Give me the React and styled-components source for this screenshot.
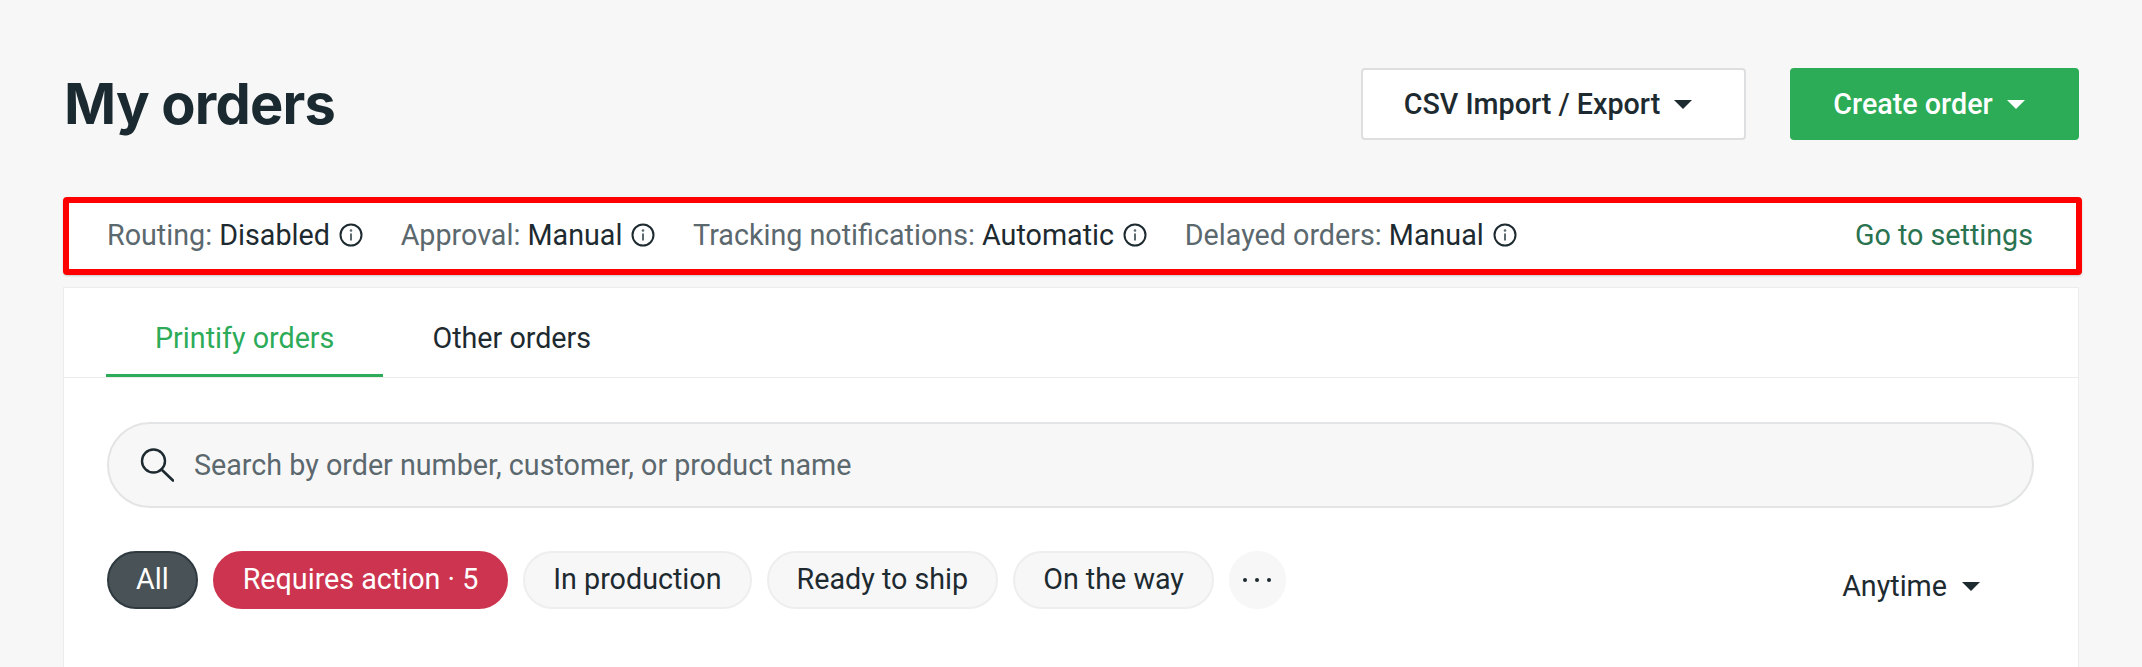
import React from "react";
import styled, { createGlobalStyle } from "styled-components";

const Global = createGlobalStyle`
  html, body { margin: 0; padding: 0; background: #f7f7f7; }
  body { font-family: Roboto, "Liberation Sans", sans-serif; color: #1d2a30; }
`;

const Page = styled.div`
  box-sizing: border-box;
  width: 2142px;
  height: 667px;
  overflow: hidden;
  padding: 68px 63px 0;
  background: #f7f7f7;
`;

const Header = styled.header`
  display: flex;
  align-items: center;
  justify-content: space-between;
  height: 72px;
`;

const Title = styled.h1`
  margin: 0;
  font-family: Inter, sans-serif;
  font-size: 56px;
  font-weight: 700;
  line-height: 72px;
  letter-spacing: -0.8px;
  color: #1a2a30;
  padding-left: 1px;
`;

const Actions = styled.div`
  display: flex;
  gap: 44px;
`;

const Button = styled.button`
  box-sizing: border-box;
  height: 72px;
  width: ${(p) => p.$width}px;
  padding: 0 11px 0 0;
  display: inline-flex;
  align-items: center;
  justify-content: center;
  gap: 14px;
  border-radius: 4px;
  font-family: inherit;
  font-size: 28.7px;
  font-weight: 500;
  border: 2px solid ${(p) => (p.$primary ? "#2cac57" : "#dcdedf")};
  background: ${(p) => (p.$primary ? "#2cac57" : "#fff")};
  color: ${(p) => (p.$primary ? "#fff" : "#1d2a30")};
`;

const Caret = styled.span`
  display: inline-block;
  width: 0;
  height: 0;
  border-left: 9px solid transparent;
  border-right: 9px solid transparent;
  border-top: 9px solid currentColor;
`;

const StatusBar = styled.div`
  box-sizing: border-box;
  height: 78px;
  margin: 57px -3px 12px 0;
  padding: 0 43px 2px 38px;
  display: flex;
  align-items: center;
  justify-content: space-between;
  background: #fff;
  border: 6px solid #ff0000;
  border-radius: 4px;
  box-shadow: 0 1px 2px rgba(0, 0, 0, 0.18);
  font-size: 28.7px;
`;

const StatusList = styled.div`
  display: flex;
  align-items: center;
  gap: 37.7px;
`;

const StatusItem = styled.span`
  display: inline-flex;
  align-items: center;
  gap: 9px;
  color: #5b686e;
  white-space: nowrap;
`;

const StatusValue = styled.b`
  font-weight: 400;
  color: #1d2a30;
`;

const SettingsLink = styled.a`
  color: #2a7350;
  text-decoration: none;
`;

const Card = styled.section`
  box-sizing: border-box;
  height: 400px;
  background: #fff;
  border: 1px solid #ececec;
  border-bottom: none;
`;

const Tabs = styled.div`
  display: flex;
  height: 89px;
  padding-left: 42px;
  border-bottom: 1px solid #ececec;
`;

const Tab = styled.div`
  box-sizing: border-box;
  height: 89px;
  padding: 14px 49px 0;
  display: flex;
  align-items: center;
  font-size: 28.7px;
  color: ${(p) => (p.$active ? "#2dab58" : "#1d2a30")};
  border-bottom: 3px solid ${(p) => (p.$active ? "#2dab58" : "transparent")};
`;

const Search = styled.div`
  box-sizing: border-box;
  height: 86px;
  margin: 44px 44px 0 43px;
  padding: 0 32px 0 31px;
  display: flex;
  align-items: center;
  gap: 20px;
  background: #f7f7f7;
  border: 2px solid #e3e4e5;
  border-radius: 43px;
  font-size: 28.7px;
  color: #5b686e;
`;

const FilterRow = styled.div`
  display: flex;
  align-items: center;
  justify-content: space-between;
  margin: 43px 0 0 43px;
  padding-right: 98px;
`;

const Chips = styled.div`
  display: flex;
  gap: 15px;
`;

const Chip = styled.div`
  box-sizing: border-box;
  height: 58px;
  padding: 0 ${(p) => p.$pad ?? 28}px 2px;
  display: inline-flex;
  align-items: center;
  justify-content: center;
  border-radius: 29px;
  font-size: 28.7px;
  white-space: nowrap;
  color: ${(p) => (p.$tone ? "#fff" : "#1d2a30")};
  background: ${(p) =>
    p.$tone === "danger" ? "#cd344f" : p.$tone === "dark" ? "#495257" : "#f7f7f7"};
  border: 2px solid
    ${(p) =>
      p.$tone === "danger" ? "#cd344f" : p.$tone === "dark" ? "#2f3a40" : "#eeeeee"};
`;

const MoreChip = styled(Chip)`
  width: 57px;
  padding: 0;
  border-color: #f7f7f7;
`;

const Period = styled.div`
  display: inline-flex;
  align-items: center;
  gap: 15px;
  font-size: 28.7px;
  margin-top: 12px;
`;

const Info = () => (
  <svg width="24" height="24" viewBox="0 0 24 24" fill="none" aria-hidden="true">
    <circle cx="12" cy="12" r="10.5" stroke="#1d2a30" strokeWidth="2" />
    <path d="M12 10.5v7" stroke="#5b686e" strokeWidth="2" />
    <circle cx="12" cy="7.5" r="1.3" fill="#5b686e" />
  </svg>
);

const SearchIcon = () => (
  <svg width="34" height="34" viewBox="0 0 34 34" fill="none" aria-hidden="true">
    <circle cx="13.5" cy="13" r="11.5" stroke="#1d2a30" strokeWidth="2.4" />
    <path d="M21.5 21.5L33 32.5" stroke="#1d2a30" strokeWidth="2.6" strokeLinecap="round" />
  </svg>
);

const Dots = () => (
  <svg width="30" height="6" viewBox="0 0 30 6" fill="#1d2a30" aria-hidden="true">
    <circle cx="3" cy="3" r="2" />
    <circle cx="15" cy="3" r="2" />
    <circle cx="27" cy="3" r="2" />
  </svg>
);

const statuses = [
  ["Routing:", "Disabled"],
  ["Approval:", "Manual"],
  ["Tracking notifications:", "Automatic"],
  ["Delayed orders:", "Manual"],
];

export default function App() {
  return (
    <Page>
      <Global />
      <Header>
        <Title>My orders</Title>
        <Actions>
          <Button $width={385}>
            CSV Import / Export <Caret />
          </Button>
          <Button $primary $width={289}>
            Create order <Caret />
          </Button>
        </Actions>
      </Header>
      <StatusBar>
        <StatusList>
          {statuses.map(([label, value]) => (
            <StatusItem key={label}>
              <span>
                {label} <StatusValue>{value}</StatusValue>
              </span>
              <Info />
            </StatusItem>
          ))}
        </StatusList>
        <SettingsLink>Go to settings</SettingsLink>
      </StatusBar>
      <Card>
        <Tabs>
          <Tab $active>Printify orders</Tab>
          <Tab>Other orders</Tab>
        </Tabs>
        <Search>
          <SearchIcon />
          Search by order number, customer, or product name
        </Search>
        <FilterRow>
          <Chips>
            <Chip $tone="dark" $pad={27}>All</Chip>
            <Chip $tone="danger">Requires action · 5</Chip>
            <Chip>In production</Chip>
            <Chip>Ready to ship</Chip>
            <Chip>On the way</Chip>
            <MoreChip>
              <Dots />
            </MoreChip>
          </Chips>
          <Period>
            Anytime <Caret />
          </Period>
        </FilterRow>
      </Card>
    </Page>
  );
}
